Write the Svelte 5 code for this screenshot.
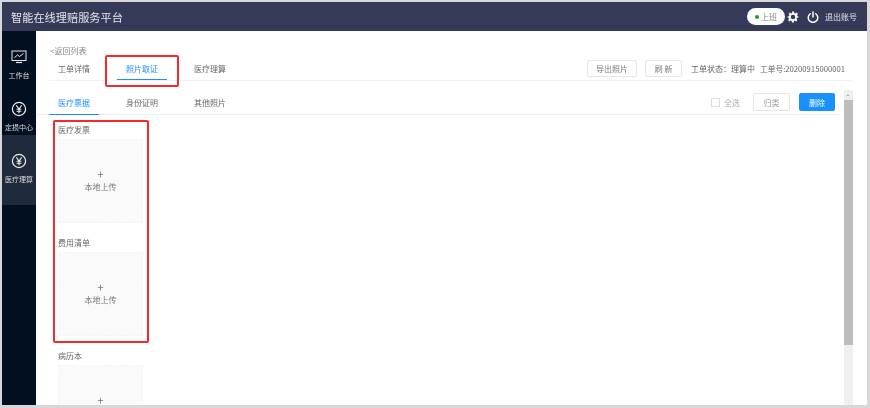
<script>
	const topTabs = ['工单详情', '照片取证', '医疗理算'];
	const subTabs = ['医疗票据', '身份证明', '其他照片'];
	const groups = ['医疗发票', '费用清单', '病历本'];
</script>

<div class="frame">
	<header class="topbar">
		<span class="title">智能在线理赔服务平台</span>
		<div class="topright">
			<span class="status"><i class="dot"></i>上班</span>
			<svg class="gear" viewBox="0 0 24 24" width="12" height="12">
				<path fill="#fff" fill-rule="evenodd" d="M10 1h4l.6 3.1 1.9.8 2.6-1.8 2.8 2.8-1.8 2.6.8 1.9L23 11v2l-3.1.6-.8 1.9 1.8 2.6-2.8 2.8-2.6-1.8-1.9.8L14 23h-4l-.6-3.1-1.9-.8-2.6 1.8-2.8-2.8 1.8-2.6-.8-1.9L1 13v-2l3.1-.6.8-1.9L3.1 5.9l2.8-2.8 2.6 1.8 1.9-.8zM12 7.5a4.5 4.5 0 1 0 0 9 4.5 4.5 0 0 0 0-9z"/>
			</svg>
			<svg class="power" viewBox="0 0 24 24" width="12" height="12">
				<path fill="none" stroke="#fff" stroke-width="3" stroke-linecap="round" d="M12 2v10M6.5 5.5a9.5 9.5 0 1 0 11 0"/>
			</svg>
			<span class="logout">退出账号</span>
		</div>
	</header>

	<div class="body">
		<nav class="side">
			<div class="item">
				<svg viewBox="0 -1 16 16" width="16" height="16">
					<rect x="1" y="1" width="14" height="9.5" fill="none" stroke="#e8e8e8" stroke-width="1"/>
					<path d="M3.5 7.5l3-2.5 2 1.5 4-3" fill="none" stroke="#e8e8e8" stroke-width="1"/>
					<path d="M5 12.5h6" stroke="#e8e8e8" stroke-width="1.2"/>
				</svg>
				<span>工作台</span>
			</div>
			{#each ['定损中心', '医疗理算'] as label, i}
				<div class="item" class:active={i === 1}>
					<svg viewBox="0 0 16 16" width="16" height="16">
						<circle cx="8" cy="8" r="6.6" fill="none" stroke="#eee" stroke-width="1.2"/>
						<path d="M5.3 4.2L8 8l2.7-3.8M8 8v4.2M5.6 8.3h4.8M5.6 10.2h4.8" fill="none" stroke="#eee" stroke-width="1.1"/>
					</svg>
					<span>{label}</span>
				</div>
			{/each}
		</nav>

		<main class="main">
			<div class="back">&lt;返回列表</div>
			<div class="tabrow">
				<div class="tabs">
					{#each topTabs as tab, i}
						<div class="tab" class:on={i === 1}>{tab}</div>
					{/each}
				</div>
				<div class="tools">
					<button class="btn wide">导出照片</button>
					<button class="btn narrow">刷 新</button>
					<span class="info state">工单状态：理算中</span>
					<span class="info">工单号:20200915000001</span>
				</div>
			</div>

			<div class="panel">
				<div class="inner">
					<div class="subrow">
						<div class="subtabs">
							{#each subTabs as tab, i}
								<div class="tab" class:on={i === 0}>{tab}</div>
							{/each}
						</div>
						<div class="actions">
							<label class="check"><i class="box"></i>全选</label>
							<button class="btn sort">归类</button>
							<button class="btn del">删除</button>
						</div>
					</div>
					<div class="groups">
						{#each groups as g}
							<section class="group">
								<div class="glabel">{g}</div>
								<div class="upload">
									<span class="plus">+</span>
									<span>本地上传</span>
								</div>
							</section>
						{/each}
					</div>
				</div>
				<div class="scroll">
					<div class="arrow"></div>
					<div class="thumb"></div>
				</div>
			</div>
		</main>
	</div>

	<div class="mark mark1"></div>
	<div class="mark mark2"></div>
</div>

<style>
	:global(body) { margin: 0; background: #fff; }
	.frame {
		position: relative;
		width: 870px;
		height: 408px;
		box-sizing: border-box;
		border: solid #d8d8d8;
		border-width: 2px 3px 3px 2px;
		overflow: hidden;
		display: flex;
		flex-direction: column;
		font-family: "Noto Sans CJK SC", "Liberation Sans", sans-serif;
		font-size: 8px;
		color: #666;
		background: #fff;
		filter: blur(0.45px);
	}
	.topbar {
		flex: none;
		height: 29px;
		background: #343a58;
		display: flex;
		align-items: center;
		justify-content: space-between;
		padding: 0 10px 0 9px;
		color: #e4e5ea;
	}
	.title { font-size: 11.2px; }
	.topright { display: flex; align-items: center; }
	.status {
		width: 38px;
		height: 17px;
		border-radius: 9px;
		background: #fff;
		display: flex;
		align-items: center;
		justify-content: center;
		gap: 2px;
		color: #888;
	}
	.dot { width: 4px; height: 4px; border-radius: 50%; background: #1aa01a; }
	.gear { margin-left: 2px; }
	.power { margin-left: 8px; }
	.logout { margin-left: 6px; color: #e4e5ea; }

	.body { flex: 1; display: flex; min-height: 0; }
	.side { flex: none; width: 34px; background: #020f20; color: #ddd; font-size: 7px; }
	.item {
		height: 52px;
		box-sizing: border-box;
		padding-top: 18px;
		display: flex;
		flex-direction: column;
		align-items: center;
		gap: 5px;
		line-height: 10px;
		white-space: nowrap;
	}
	.item.active { height: 70px; background: #1f2a3d; }

	.main { flex: 1; min-width: 0; padding: 14px 0 0 0; display: flex; flex-direction: column; }
	.back { margin-left: 14px; height: 11px; line-height: 11px; color: #888; }
	.tabrow {
		height: 25px;
		margin: 0 14px 0 13px;
		border-bottom: 1px solid #f2f2f2;
		display: flex;
		justify-content: space-between;
		box-sizing: border-box;
	}
	.tabs, .subtabs { display: flex; gap: 18px; }
	.tab {
		width: 50px;
		text-align: center;
		line-height: 20px;
		padding-top: 3px;
		height: 24px;
		box-sizing: border-box;
		color: #666;
	}
	.tab.on { color: #1890ff; border-bottom: 1.5px solid #1890ff; }
	.tools { display: flex; align-items: center; height: 20px; margin: 2px 8px 0 0; }
	.btn {
		font: inherit;
		padding: 0;
		box-sizing: border-box;
		border: 1px solid #e6e6e6;
		border-radius: 2px;
		background: #fff;
		color: #777;
	}
	.wide { width: 50px; height: 17px; }
	.narrow { width: 37px; height: 17px; margin-left: 8px; margin-right: 9px; }
	.info { margin-right: 5px; white-space: nowrap; color: #666; font-size: 7.7px; }
	.info.state { font-size: 8px; }
	.info:last-child { margin-right: 0; }

	.panel { flex: 1; min-height: 0; display: flex; margin-top: 9px; }
	.inner { flex: 1; min-width: 0; overflow: hidden; }
	.subrow {
		height: 25px;
		box-sizing: border-box;
		border-bottom: 1px solid #ececec;
		padding-left: 13px;
		margin-right: 5px;
		display: flex;
		justify-content: space-between;
	}
	.subtabs .tab { height: 25px; }
	.actions { display: flex; align-items: center; padding-right: 4px; height: 24px; }
	.check { display: flex; align-items: center; gap: 4px; color: #aaa; margin-right: 13px; }
	.box { width: 9px; height: 9px; box-sizing: border-box; border: 1px solid #ddd; }
	.sort { width: 37px; height: 18px; margin-right: 9px; color: #999; }
	.del { width: 36px; height: 18px; background: #1890ff; border-color: #1890ff; color: #fff; }

	.groups { padding: 10px 0 0 22px; }
	.group { height: 113px; }
	.glabel { height: 14px; line-height: 9px; color: #666; }
	.upload {
		width: 85px;
		height: 84px;
		box-sizing: border-box;
		border: 1px dashed #f4f4f4;
		background: #fafafa;
		padding-bottom: 3px;
		display: flex;
		flex-direction: column;
		align-items: center;
		justify-content: center;
		line-height: 11px;
		color: #777;
	}
	.plus { font-size: 11px; line-height: 14px; }

	.scroll { flex: none; width: 9px; margin-right: 14px; background: #efefef; display: flex; flex-direction: column; }
	.arrow { height: 10px; position: relative; }
	.arrow::after {
		content: '';
		position: absolute;
		left: 3px;
		top: 4px;
		border: solid transparent;
		border-width: 0 1.5px 2px;
		border-bottom-color: #999;
	}
	.thumb { height: 245px; background: #bdbdbd; }

	/* red annotation boxes drawn over the screenshot */
	.mark { position: absolute; border: 2px solid #f5282a; border-radius: 2px; box-sizing: border-box; }
	.mark1 { left: 103px; top: 53px; width: 74px; height: 32px; }
	.mark2 { left: 51px; top: 118px; width: 96px; height: 223px; }
</style>
